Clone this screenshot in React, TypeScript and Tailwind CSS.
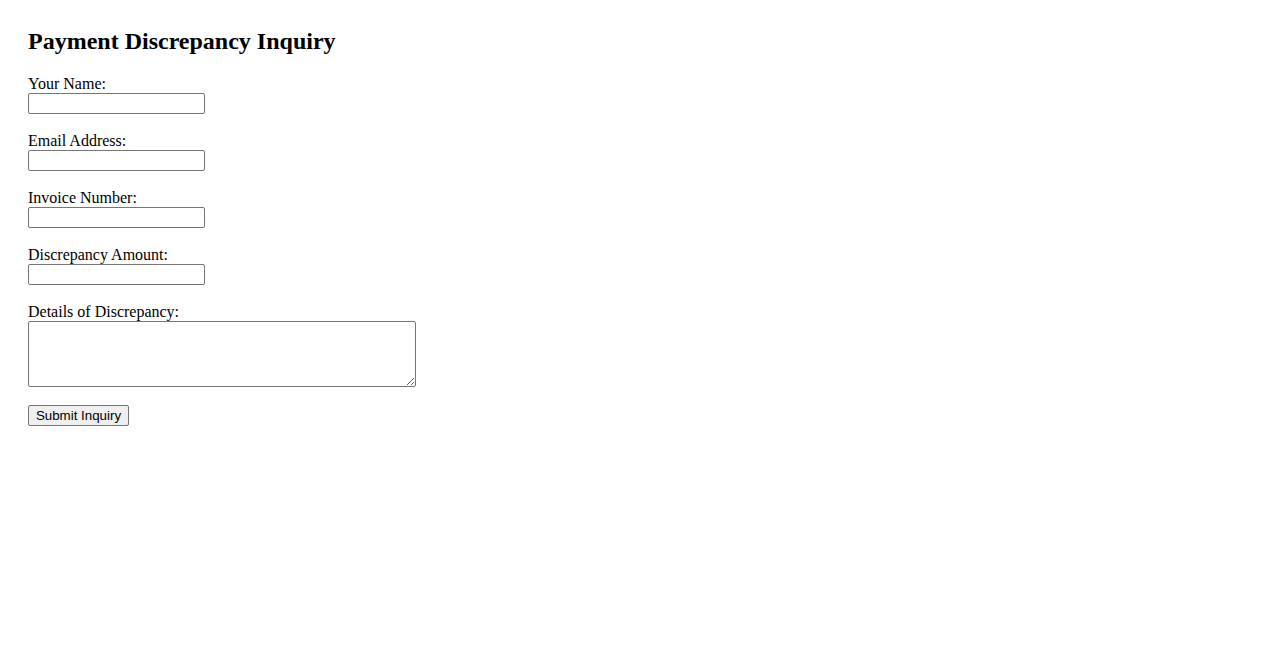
import React from 'react'

const fields = [
  { id: 'name', label: 'Your Name:', type: 'text' },
  { id: 'email', label: 'Email Address:', type: 'email' },
  { id: 'invoice', label: 'Invoice Number:', type: 'text' },
  { id: 'amount', label: 'Discrepancy Amount:', type: 'text' },
]

const App = () => {
  return (
    <div className="min-h-screen bg-white px-[28px] pt-[27px] font-['Liberation_Serif',serif] text-black">
      <h2 className="text-[24px] font-bold leading-[28px] mb-[20px]">Payment Discrepancy Inquiry</h2>

      <form onSubmit={(e) => e.preventDefault()}>
        {fields.map((f) => (
          <div key={f.id} className="mb-[18px]">
            <label htmlFor={f.id} className="block text-[16px] leading-[18px]">
              {f.label}
            </label>
            <input
              id={f.id}
              name={f.id}
              type={f.type}
              className="block w-[177px] h-[21px] px-[2px] py-[1px] border border-[#767676] rounded-[2px] bg-white text-[13.33px] font-['Liberation_Sans',sans-serif]"
            />
          </div>
        ))}

        {/* Details */}
        <div className="mb-[18px]">
          <label htmlFor="details" className="block text-[16px] leading-[18px]">
            Details of Discrepancy:
          </label>
          <textarea
            id="details"
            name="details"
            className="block w-[388px] h-[66px] p-[2px] border border-[#767676] rounded-[2px] bg-white text-[13.33px] font-['Liberation_Mono',monospace]"
          />
        </div>

        <button
          type="submit"
          className="block w-[101px] h-[21px] px-[6px] border border-[#767676] rounded-[2px] bg-[#efefef] text-[13.33px] leading-[15px] font-['Liberation_Sans',sans-serif] text-black"
        >
          Submit Inquiry
        </button>
      </form>
    </div>
  )
}

export default App
